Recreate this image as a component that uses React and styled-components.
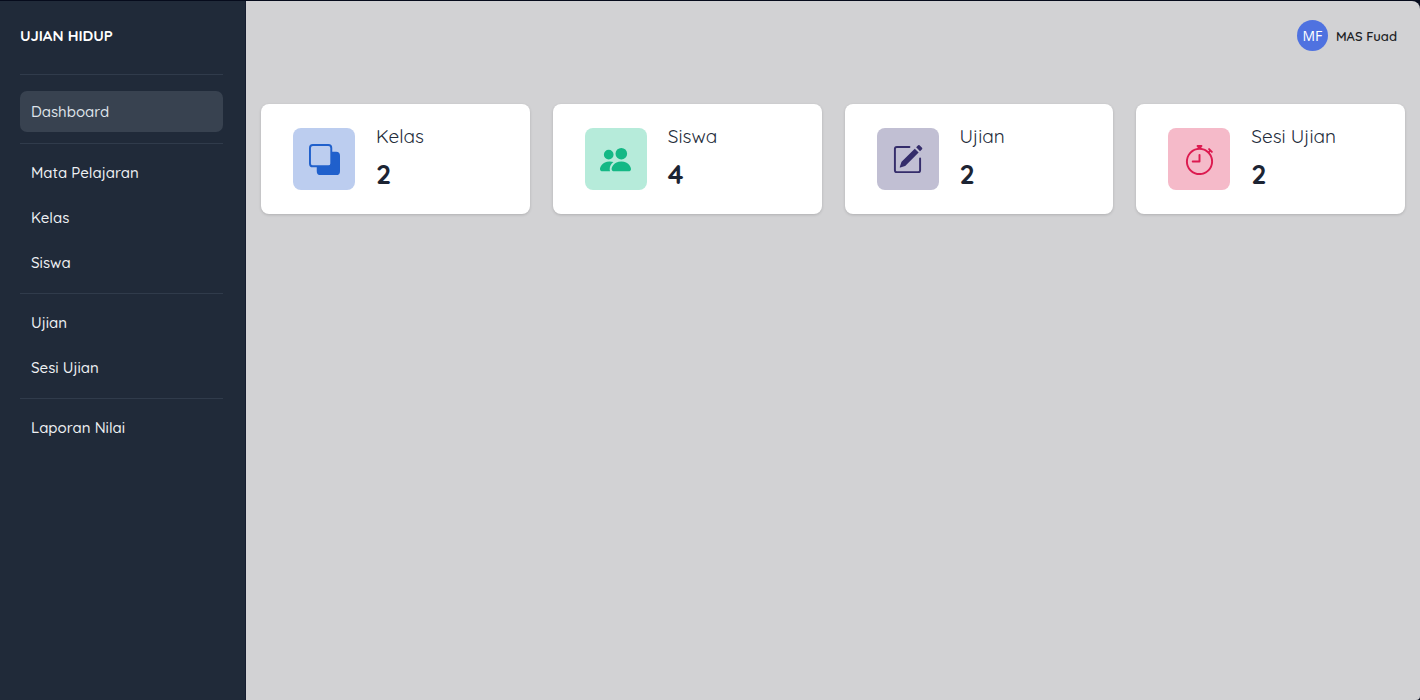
import styled, { createGlobalStyle } from 'styled-components';
import { BsBack, BsPeopleFill, BsPencilSquare, BsStopwatch } from 'react-icons/bs';

const menuGroups = [
  [{ name: 'Dashboard', path: '#dashboard' }],
  [
    { name: 'Mata Pelajaran', path: '#mata-pelajaran' },
    { name: 'Kelas', path: '#kelas' },
    { name: 'Siswa', path: '#siswa' },
  ],
  [
    { name: 'Ujian', path: '#ujian' },
    { name: 'Sesi Ujian', path: '#sesi-ujian' },
  ],
  [{ name: 'Laporan Nilai', path: '#laporan-nilai' }],
];

const stats = [
  { label: 'Kelas', total: 2, icon: <BsBack />, color: '#2060cc', background: '#bccdef' },
  { label: 'Siswa', total: 4, icon: <BsPeopleFill />, color: '#14b885', background: '#b6ebda' },
  { label: 'Ujian', total: 2, icon: <BsPencilSquare />, color: '#352d6b', background: '#c1bfd3' },
  { label: 'Sesi Ujian', total: 2, icon: <BsStopwatch />, color: '#dc1b50', background: '#f5bac9' },
];

const Sidebar = () => (
  <SidebarContainer>
    <Brand>UJIAN HIDUP</Brand>
    <nav>
      {menuGroups.map((group) => (
        <MenuGroup key={group[0].name}>
          {group.map((item) => (
            <li key={item.name}>
              <MenuLink href={item.path} $active={item.name === 'Dashboard'}>
                {item.name}
              </MenuLink>
            </li>
          ))}
        </MenuGroup>
      ))}
    </nav>
  </SidebarContainer>
);

const StatCard = ({ stat }) => (
  <Card>
    <IconBox $color={stat.color} $background={stat.background}>
      {stat.icon}
    </IconBox>
    <CardText>
      <CardLabel>{stat.label}</CardLabel>
      <CardTotal>{stat.total}</CardTotal>
    </CardText>
  </Card>
);

const App = () => (
  <>
    <GlobalStyle />
    <Layout>
      <Sidebar />
      <Main>
        <Header>
          <UserButton type="button">
            <Avatar>MF</Avatar>
            MAS Fuad
          </UserButton>
        </Header>
        <CardGrid>
          {stats.map((stat) => (
            <StatCard key={stat.label} stat={stat} />
          ))}
        </CardGrid>
      </Main>
    </Layout>
  </>
);

export default App;

const GlobalStyle = createGlobalStyle`
  * {
    box-sizing: border-box;
  }
  body {
    margin: 0;
    background-color: #060b1c;
    font-family: Quicksand, Lato, 'Open Sans', sans-serif;
  }
`;

const Layout = styled.div`
  display: flex;
  min-height: 100vh;
  padding-top: 1px;
`;

const SidebarContainer = styled.aside`
  flex: 0 0 246px;
  padding: 0 22px 0 20px;
  border-right: 1px solid #161d30;
  background-color: #202a39;
`;

const Brand = styled.h1`
  margin: 0;
  padding: 25px 0 28px;
  font-size: 15px;
  line-height: 20px;
  font-weight: 700;
  color: #ffffff;
`;

const MenuGroup = styled.ul`
  display: flex;
  flex-direction: column;
  gap: 4px;
  margin: 0;
  padding: 8px 0 10px;
  border-top: 1px solid #303b4b;
  list-style: none;
  &:first-child {
    padding: 16px 0 11px;
  }
`;

const MenuLink = styled.a`
  display: block;
  padding: 10px 11px;
  border-radius: 7px;
  background-color: ${(props) => (props.$active ? '#384250' : 'transparent')};
  font-size: 15px;
  line-height: 21px;
  font-weight: 500;
  color: ${(props) => (props.$active ? '#dfe3ea' : '#eef0f3')};
  text-decoration: none;
`;

const Main = styled.main`
  flex: 1;
  min-width: 0;
  border-radius: 0 8px 4px 0;
  background-color: #d2d2d4;
`;

const Header = styled.header`
  display: flex;
  justify-content: flex-end;
  padding: 19px 23px;
`;

const UserButton = styled.button`
  display: flex;
  align-items: center;
  gap: 8px;
  padding: 0;
  border: none;
  background: none;
  font-family: inherit;
  font-size: 13px;
  font-weight: 600;
  color: #1c1e24;
  cursor: pointer;
`;

const Avatar = styled.span`
  display: flex;
  align-items: center;
  justify-content: center;
  width: 31px;
  height: 31px;
  border-radius: 50%;
  background-color: #4f72e0;
  font-family: 'Open Sans', sans-serif;
  font-size: 14px;
  font-weight: 400;
  color: #ffffff;
`;

const CardGrid = styled.section`
  display: grid;
  grid-template-columns: repeat(4, minmax(0, 1fr));
  gap: 23px;
  padding: 34px 15px;
`;

const Card = styled.article`
  display: flex;
  align-items: center;
  gap: 21px;
  padding: 18px 32px;
  border-radius: 8px;
  background-color: #ffffff;
  box-shadow: 0 1px 3px rgba(0, 0, 0, 0.16);
`;

const IconBox = styled.div`
  display: flex;
  align-items: center;
  justify-content: center;
  width: 62px;
  height: 62px;
  border-radius: 8px;
  background-color: ${(props) => props.$background};
  font-size: 31px;
  color: ${(props) => props.$color};
`;

const CardText = styled.div`
  padding-bottom: 6px;
`;

const CardLabel = styled.h2`
  margin: 0 0 8px;
  font-size: 19px;
  line-height: 28px;
  font-weight: 400;
  color: #242c3a;
`;

const CardTotal = styled.p`
  margin: 0;
  font-size: 27px;
  line-height: 32px;
  font-weight: 700;
  color: #1c2433;
`;
